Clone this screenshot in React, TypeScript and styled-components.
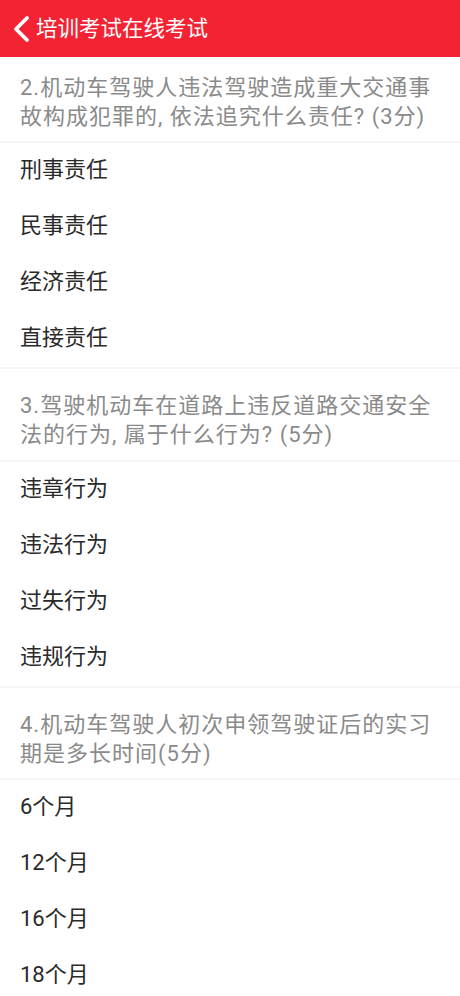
import React from "react";
import styled, { createGlobalStyle } from "styled-components";

const GlobalStyle = createGlobalStyle`
  html, body {
    margin: 0;
    padding: 0;
    background: #ffffff;
  }
  body {
    font-family: Roboto, "Noto Sans CJK SC", "Noto Sans", sans-serif;
    overflow: hidden;
  }
  * { box-sizing: border-box; }
`;

const Page = styled.div`
  display: flex;
  flex-direction: column;
  width: 460px;
  background: #ffffff;
`;

const Header = styled.header`
  display: flex;
  align-items: center;
  height: 57px;
  padding-left: 11px;
  gap: 5px;
  background: #f42333;
  color: #ffffff;
`;

const BackButton = styled.button`
  display: flex;
  align-items: center;
  justify-content: center;
  width: 20px;
  height: 30px;
  padding: 0;
  border: none;
  background: transparent;
  color: #ffffff;
  cursor: pointer;
`;

const Title = styled.h1`
  margin: 0;
  font-size: 21.5px;
  line-height: 22px;
  font-weight: 400;
  color: #ffffff;
`;

const Question = styled.div<{ $first?: boolean }>`
  padding: ${(p) => (p.$first ? "17px" : "23px")} 20px 10px 20px;
  font-size: 22px;
  line-height: 28.7px;
  letter-spacing: 1px;
  color: #8a8a8a;
  border-bottom: 2px solid #f5f5f5;
`;

const Options = styled.div`
  display: flex;
  flex-direction: column;
  border-bottom: 2px solid #f5f5f5;
`;

const Option = styled.div`
  height: 56px;
  padding: 16px 20px 0 20px;
  font-size: 22px;
  line-height: 22px;
  color: #2a2a2a;
`;

const ChevronLeft = () => (
  <svg width="18" height="28" viewBox="0 0 18 28" fill="none">
    <path
      d="M15 3 L4 14 L15 25"
      stroke="#ffffff"
      strokeWidth="3.8"
      strokeLinecap="round"
      strokeLinejoin="round"
    />
  </svg>
);

type Q = { title: string; options: string[] };

const questions: Q[] = [
  {
    title: "2.机动车驾驶人违法驾驶造成重大交通事故构成犯罪的, 依法追究什么责任? (3分)",
    options: ["刑事责任", "民事责任", "经济责任", "直接责任"],
  },
  {
    title: "3.驾驶机动车在道路上违反道路交通安全法的行为, 属于什么行为? (5分)",
    options: ["违章行为", "违法行为", "过失行为", "违规行为"],
  },
  {
    title: "4.机动车驾驶人初次申领驾驶证后的实习期是多长时间(5分)",
    options: ["6个月", "12个月", "16个月", "18个月"],
  },
];

export default function App() {
  return (
    <>
      <GlobalStyle />
      <Page>
        <Header>
          <BackButton aria-label="返回">
            <ChevronLeft />
          </BackButton>
          <Title>培训考试在线考试</Title>
        </Header>
        {questions.map((q, i) => (
          <React.Fragment key={i}>
            <Question $first={i === 0}>{q.title}</Question>
            <Options>
              {q.options.map((o) => (
                <Option key={o}>{o}</Option>
              ))}
            </Options>
          </React.Fragment>
        ))}
      </Page>
    </>
  );
}
